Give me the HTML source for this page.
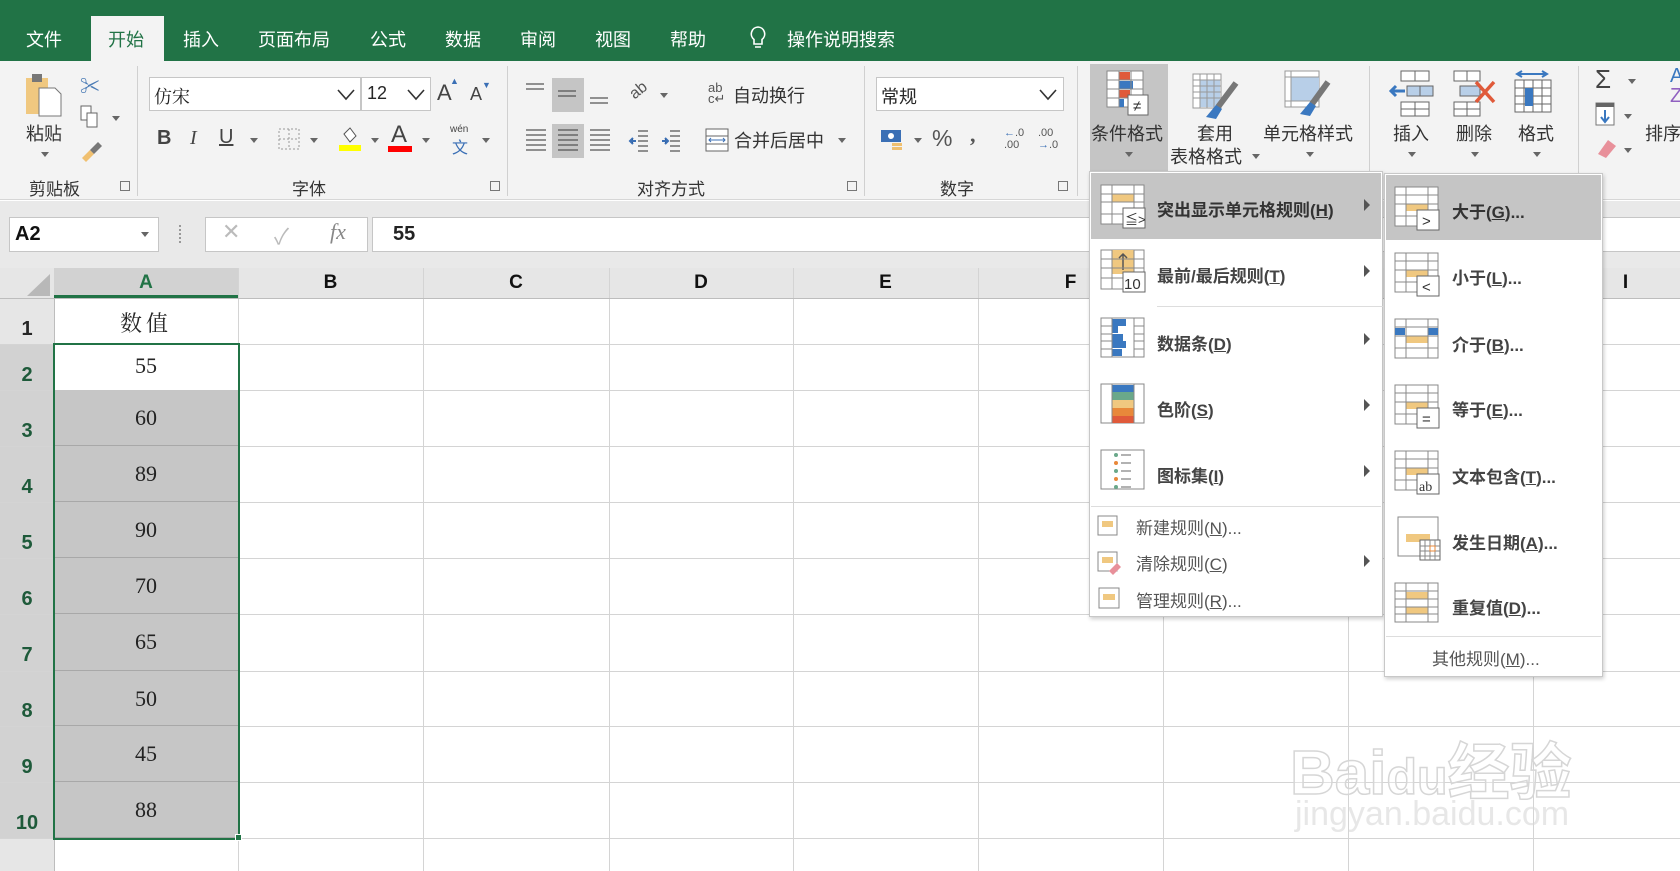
<!DOCTYPE html>
<html><head><meta charset="utf-8">
<style>
*{margin:0;padding:0;box-sizing:border-box}
body{width:1680px;height:871px;overflow:hidden;position:relative;background:#fff;font-family:"Liberation Sans","Noto Sans CJK SC",sans-serif;color:#262626}
.a{position:absolute}
.tab{position:absolute;top:26px;font-size:18px;color:#fff;white-space:nowrap}
.lbl{position:absolute;font-size:17px;color:#333;white-space:nowrap}
.sep{position:absolute;top:66px;width:1px;height:130px;background:#d0d0d0}
.ch{position:absolute;top:268px;height:30px;font:900 19px "Liberation Sans",sans-serif;text-align:center;line-height:30px;color:#111}
.cell{position:absolute;left:54px;width:184px;text-align:center;font:22px "Liberation Serif","Noto Serif CJK SC",serif;color:#222;background:#c6c6c6;border-bottom:1px solid #a8a8a8}
.mi{position:absolute;font-size:17px;font-weight:bold;color:#444;white-space:nowrap}
.ms{position:absolute;font-size:17px;color:#555;white-space:nowrap}
.tri{position:absolute;width:0;height:0;border-top:6px solid transparent;border-bottom:6px solid transparent;border-left:6px solid #555}
.dd{position:absolute;width:0;height:0;border-left:4px solid transparent;border-right:4px solid transparent;border-top:5px solid #666}
</style></head><body>
<div class="a" style="left:0;top:0;width:1680px;height:61px;background:#217346"></div>
<div class="a" style="left:91px;top:16px;width:73px;height:46px;background:#f3f3f3"></div>
<div class="tab" style="left:26px">文件</div>
<div class="tab" style="left:108px;color:#217346">开始</div>
<div class="tab" style="left:183px">插入</div>
<div class="tab" style="left:258px">页面布局</div>
<div class="tab" style="left:370px">公式</div>
<div class="tab" style="left:445px">数据</div>
<div class="tab" style="left:520px">审阅</div>
<div class="tab" style="left:595px">视图</div>
<div class="tab" style="left:670px">帮助</div>
<svg class="a" style="left:748px;top:25px" width="20" height="26"><path d="M10 2a7 7 0 0 0-4 12.5V19h8v-4.5A7 7 0 0 0 10 2z M7 22h6" fill="none" stroke="#fff" stroke-width="1.6"/></svg>
<div class="tab" style="left:787px">操作说明搜索</div>

<div class="a" style="left:0;top:61px;width:1680px;height:139px;background:#f3f3f3;border-bottom:1px solid #d6d6d6"></div>
<div class="a" style="left:1090px;top:64px;width:78px;height:108px;background:#c5c5c5"></div>
<div class="sep" style="left:137px"></div><div class="sep" style="left:507px"></div><div class="sep" style="left:864px"></div><div class="sep" style="left:1077px"></div><div class="sep" style="left:1369px"></div><div class="sep" style="left:1578px"></div>

<svg class="a" style="left:24px;top:72px" width="44" height="46"><rect x="2" y="6" width="22" height="36" fill="#f0c880"/><rect x="8" y="2" width="10" height="8" fill="#777"/><path d="M15 16h16l6 6v22H15z" fill="#fff" stroke="#777"/></svg>
<div class="lbl" style="left:26px;top:120px;font-size:18px">粘贴</div>
<div class="dd" style="left:41px;top:152px"></div>
<div class="a" style="left:80px;top:70px;font-size:20px;color:#4a7bb5">✂</div>
<svg class="a" style="left:80px;top:105px" width="30" height="26"><rect x="1" y="1" width="10" height="14" fill="#fff" stroke="#666"/><rect x="7" y="8" width="10" height="14" fill="#fff" stroke="#666"/></svg>
<div class="dd" style="left:112px;top:116px"></div>
<svg class="a" style="left:78px;top:138px" width="26" height="26"><path d="M4 20l8-8 4 4-8 8z" fill="#f0c070"/><path d="M12 12l8-8 4 4-8 8z" fill="#777"/></svg>
<div class="lbl" style="left:29px;top:175px">剪贴板</div>
<div class="a" style="left:120px;top:181px;width:10px;height:10px;border:1px solid #777"></div>

<div class="a" style="left:149px;top:77px;width:212px;height:34px;background:#fff;border:1px solid #c6c6c6;font:18px 'Noto Serif CJK SC',serif;padding:5px 4px;color:#222">仿宋</div>
<svg class="a" style="left:336px;top:88px" width="20" height="14"><path d="M2 2l8 9 8-9" fill="none" stroke="#333" stroke-width="1.6"/></svg>
<div class="a" style="left:361px;top:77px;width:70px;height:34px;background:#fff;border:1px solid #c6c6c6;font-size:18px;padding:5px 5px">12</div>
<svg class="a" style="left:406px;top:88px" width="20" height="14"><path d="M2 2l8 9 8-9" fill="none" stroke="#333" stroke-width="1.6"/></svg>
<div class="a" style="left:437px;top:80px;font-size:22px;color:#444">A</div><div class="a" style="left:450px;top:76px;font-size:9px;color:#3a6fb5">▲</div>
<div class="a" style="left:470px;top:84px;font-size:18px;color:#444">A</div><div class="a" style="left:482px;top:80px;font-size:9px;color:#3a6fb5">▼</div>
<div class="a" style="left:157px;top:127px;font:bold 20px 'Liberation Sans';color:#444">B</div>
<div class="a" style="left:190px;top:127px;font:italic 20px 'Liberation Serif';color:#444">I</div>
<div class="a" style="left:219px;top:126px;font:20px 'Liberation Sans';color:#444;text-decoration:underline">U</div>
<div class="dd" style="left:250px;top:138px"></div>
<svg class="a" style="left:278px;top:128px" width="22" height="22"><rect x="1" y="1" width="20" height="20" fill="none" stroke="#999" stroke-dasharray="2 2"/><path d="M11 1v20M1 11h20" stroke="#999" stroke-dasharray="2 2"/></svg>
<div class="dd" style="left:310px;top:138px"></div>
<svg class="a" style="left:338px;top:124px" width="24" height="28"><path d="M6 10l6-6 6 8-6 6z" fill="#fff" stroke="#555"/><rect x="1" y="21" width="22" height="6" fill="#ffff00"/></svg>
<div class="dd" style="left:371px;top:138px"></div>
<div class="a" style="left:391px;top:121px;font-size:24px;color:#444">A</div><div class="a" style="left:388px;top:146px;width:24px;height:6px;background:#ff0000"></div>
<div class="dd" style="left:422px;top:138px"></div>
<div class="a" style="left:450px;top:124px;font-size:10px;color:#444">wén</div><div class="a" style="left:452px;top:134px;font-size:16px;color:#3a6fb5">文</div>
<div class="dd" style="left:482px;top:138px"></div>
<div class="lbl" style="left:292px;top:175px">字体</div>
<div class="a" style="left:490px;top:181px;width:10px;height:10px;border:1px solid #777"></div>

<div class="a" style="left:552px;top:78px;width:32px;height:34px;background:#c5c5c5"></div>
<div class="a" style="left:552px;top:124px;width:32px;height:34px;background:#c5c5c5"></div>
<svg class="a" style="left:524px;top:80px" width="100" height="80" stroke="#555" stroke-width="1.3">
<path d="M2 4h18M2 9h18M34 11h18M34 16h18M66 18h18M66 23h18"/>
<path d="M2 50h20M2 55h20M2 60h20M2 65h20M2 70h20M34 50h20M34 55h20M34 60h20M34 65h20M34 70h20M66 50h20M66 55h20M66 60h20M66 65h20M66 70h20"/></svg>
<div class="a" style="left:630px;top:82px;font-size:16px;color:#555;transform:rotate(-40deg)">ab</div><div class="dd" style="left:660px;top:93px"></div>
<svg class="a" style="left:628px;top:127px" width="60" height="28" stroke="#555" stroke-width="1.3"><path d="M10 4h10M10 9h10M10 14h10M10 19h10M10 24h10M42 4h10M42 9h10M42 14h10M42 19h10M42 24h10"/><path d="M8 14l-6 0M5 11l-3 3 3 3M34 14h6M37 11l3 3-3 3" stroke="#3a6fb5" stroke-width="2"/></svg>
<div class="a" style="left:708px;top:82px;font-size:13px;color:#555;line-height:11px">ab<br>c↵</div>
<div class="lbl" style="left:733px;top:82px;font-size:18px">自动换行</div>
<svg class="a" style="left:705px;top:128px" width="24" height="24"><rect x="1" y="1" width="22" height="22" fill="#fff" stroke="#666"/><path d="M1 8h22M1 16h22" stroke="#666"/><path d="M4 12h16M6 10l-2 2 2 2M18 10l2 2-2 2" stroke="#3a6fb5" fill="none"/></svg>
<div class="lbl" style="left:734px;top:127px;font-size:18px">合并后居中</div>
<div class="dd" style="left:838px;top:138px"></div>
<div class="lbl" style="left:637px;top:175px">对齐方式</div>
<div class="a" style="left:847px;top:181px;width:10px;height:10px;border:1px solid #777"></div>

<div class="a" style="left:876px;top:77px;width:188px;height:34px;background:#fff;border:1px solid #c6c6c6;font-size:18px;padding:5px 4px">常规</div>
<svg class="a" style="left:1038px;top:88px" width="20" height="14"><path d="M2 2l8 9 8-9" fill="none" stroke="#333" stroke-width="1.6"/></svg>
<svg class="a" style="left:880px;top:128px" width="26" height="26"><rect x="1" y="2" width="20" height="12" fill="#3a6fb5"/><circle cx="11" cy="8" r="3" fill="#fff"/><rect x="12" y="15" width="10" height="3" fill="#f0c070"/><rect x="12" y="19" width="10" height="3" fill="#f0c070"/></svg>
<div class="dd" style="left:914px;top:138px"></div>
<div class="a" style="left:932px;top:125px;font-size:23px;color:#555">%</div>
<div class="a" style="left:970px;top:122px;font:bold 22px 'Liberation Serif';color:#555">,</div>
<div class="a" style="left:1004px;top:127px;font-size:11px;color:#555;line-height:12px"><span style="color:#3a6fb5">←</span>.0<br>.00</div>
<div class="a" style="left:1038px;top:127px;font-size:11px;color:#555;line-height:12px">.00<br><span style="color:#3a6fb5">→</span>.0</div>
<div class="lbl" style="left:940px;top:175px">数字</div>
<div class="a" style="left:1058px;top:181px;width:10px;height:10px;border:1px solid #777"></div>

<svg class="a" style="left:1106px;top:70px" width="46" height="50"><g fill="#fff" stroke="#888"><rect x="1" y="1" width="36" height="36"/></g><rect x="13" y="2" width="11" height="8" fill="#e05a3a"/><rect x="13" y="11" width="14" height="8" fill="#3a78c0"/><rect x="13" y="20" width="11" height="8" fill="#e05a3a"/><rect x="13" y="29" width="5" height="8" fill="#3a78c0"/><path d="M1 10h36M1 19h36M1 28h36M13 1v36M25 1v36" stroke="#888"/><rect x="22" y="25" width="20" height="20" fill="#fff" stroke="#666"/><text x="27" y="41" font-size="15" fill="#333">≠</text></svg>
<div class="lbl" style="left:1091px;top:120px;font-size:18px">条件格式</div>
<div class="dd" style="left:1125px;top:152px"></div>
<svg class="a" style="left:1192px;top:73px" width="48" height="50"><rect x="1" y="1" width="28" height="34" fill="#fff" stroke="#999"/><rect x="8" y="7" width="20" height="27" fill="#b8cfe8"/><path d="M1 7h28M1 13h28M1 19h28M1 25h28M8 1v34M15 1v34M22 1v34" stroke="#999"/><path d="M44 10l-18 24" stroke="#777" stroke-width="6"/><path d="M14 44l10-12 6 4-6 10z" fill="#3a78c0"/></svg>
<div class="lbl" style="left:1197px;top:120px;font-size:18px">套用</div>
<div class="lbl" style="left:1170px;top:143px;font-size:18px">表格格式</div><div class="dd" style="left:1252px;top:154px"></div>
<svg class="a" style="left:1284px;top:70px" width="48" height="50"><rect x="1" y="1" width="34" height="36" fill="#fff" stroke="#999"/><rect x="7" y="7" width="28" height="24" fill="#b8cfe8"/><path d="M1 7h34M7 1v36M1 31h34" stroke="#999"/><path d="M44 12l-16 22" stroke="#777" stroke-width="6"/><path d="M16 44l10-12 6 4-6 10z" fill="#3a78c0"/></svg>
<div class="lbl" style="left:1263px;top:120px;font-size:18px">单元格样式</div>
<div class="dd" style="left:1306px;top:152px"></div>
<svg class="a" style="left:1389px;top:70px" width="46" height="48" stroke="#666" fill="#fff"><rect x="12" y="1" width="28" height="10"/><path d="M26 1v10"/><rect x="18" y="16" width="26" height="10" fill="#b8cfe8"/><path d="M31 16v10"/><rect x="12" y="32" width="28" height="14"/><path d="M26 32v14M12 39h28"/><path d="M2 21h14M7 16l-5 5 5 5" stroke="#3a78c0" stroke-width="3" fill="none"/></svg>
<div class="lbl" style="left:1393px;top:120px;font-size:18px">插入</div><div class="dd" style="left:1408px;top:152px"></div>
<svg class="a" style="left:1452px;top:70px" width="46" height="48" stroke="#666" fill="#fff"><rect x="2" y="1" width="26" height="10"/><path d="M15 1v10"/><rect x="8" y="16" width="20" height="10" fill="#b8cfe8"/><rect x="2" y="32" width="26" height="14"/><path d="M15 32v14M2 39h26"/><path d="M24 12l18 20M42 12l-18 20" stroke="#e05a3a" stroke-width="3.5"/></svg>
<div class="lbl" style="left:1456px;top:120px;font-size:18px">删除</div><div class="dd" style="left:1471px;top:152px"></div>
<svg class="a" style="left:1514px;top:70px" width="40" height="48" stroke="#666" fill="#fff"><path d="M3 4h30M8 1l-5 3 5 3M28 1l5 3-5 3" stroke="#3a78c0" stroke-width="2" fill="none"/><rect x="1" y="10" width="36" height="32"/><path d="M1 18h36M1 26h36M1 34h36M10 10v32M19 10v32M28 10v32"/><rect x="11" y="18" width="8" height="18" fill="#3a78c0" stroke="none"/></svg>
<div class="lbl" style="left:1518px;top:120px;font-size:18px">格式</div><div class="dd" style="left:1533px;top:152px"></div>
<div class="a" style="left:1595px;top:64px;font-size:26px;color:#444">Σ</div><div class="dd" style="left:1628px;top:79px"></div>
<svg class="a" style="left:1595px;top:102px" width="22" height="24"><rect x="1" y="1" width="18" height="22" fill="#fff" stroke="#777"/><rect x="1" y="1" width="18" height="4" fill="#666"/><path d="M10 8v12M6 15l4 5 4-5" stroke="#3a78c0" stroke-width="2" fill="none"/></svg><div class="dd" style="left:1624px;top:114px"></div>
<svg class="a" style="left:1594px;top:136px" width="24" height="24"><path d="M4 18l10-14 8 6-10 12z" fill="#e8909a"/></svg><div class="dd" style="left:1624px;top:148px"></div>
<div class="a" style="left:1670px;top:66px;font-size:20px;color:#3a78c0;line-height:20px">A<br><span style="color:#9060c0">Z</span></div>
<div class="lbl" style="left:1645px;top:120px;font-size:18px">排序</div>

<div class="a" style="left:0;top:201px;width:1680px;height:67px;background:#e9e9e9"></div>
<div class="a" style="left:9px;top:217px;width:150px;height:35px;background:#fff;border:1px solid #c6c6c6;font:900 20px 'Liberation Sans';padding:5px 5px;color:#111">A2</div>
<div class="dd" style="left:141px;top:232px"></div>
<div class="a" style="left:179px;top:225px;width:2px;height:18px;border-left:2px dotted #999"></div>
<div class="a" style="left:205px;top:217px;width:163px;height:35px;background:#fff;border:1px solid #c6c6c6"></div>
<div class="a" style="left:222px;top:219px;font-size:22px;color:#bbb">✕</div>
<div class="a" style="left:274px;top:219px;font-size:22px;color:#bbb">✓</div>
<div class="a" style="left:330px;top:219px;font:italic 22px 'Liberation Serif';color:#888">fx</div>
<div class="a" style="left:372px;top:217px;width:1320px;height:35px;background:#fff;border:1px solid #c6c6c6;font:900 20px 'Liberation Sans';padding:5px 20px;color:#222">55</div>

<svg class="a" style="left:0;top:268px" width="1680" height="603">
<rect x="0" y="0" width="1680" height="30" fill="#e6e6e6"/>
<rect x="0" y="30" width="54" height="573" fill="#e6e6e6"/>
<rect x="0" y="76" width="54" height="494" fill="#d2d2d2"/>
<path d="M27 28L50 28L50 6Z" fill="#b8b8b8"/>
<g stroke="#d4d4d4"><path d="M0 76.5H1680M0 122.5H1680M0 178.5H1680M0 234.5H1680M0 290.5H1680M0 346.5H1680M0 403.5H1680M0 458.5H1680M0 514.5H1680M0 570.5H1680"/>
<path d="M238.5 0V603M423.5 0V603M609.5 0V603M793.5 0V603M978.5 0V603M1163.5 0V603M1348.5 0V603M1533.5 0V603"/></g>
<path d="M0 30.5H1680M54.5 0V603" stroke="#bdbdbd"/>
<rect x="54" y="0" width="184" height="30" fill="#d2d2d2"/><rect x="54" y="27" width="184" height="3" fill="#217346"/>
</svg>
<div class="ch" style="left:54px;width:184px;color:#217346">A</div>
<div class="ch" style="left:238px;width:185px">B</div>
<div class="ch" style="left:423px;width:186px">C</div>
<div class="ch" style="left:609px;width:184px">D</div>
<div class="ch" style="left:793px;width:185px">E</div>
<div class="ch" style="left:978px;width:185px">F</div>
<div class="ch" style="left:1533px;width:185px">I</div>
<div class="a" style="left:0;top:318px;width:54px;text-align:center;font:900 20px 'Liberation Sans'">1</div>
<div class="a" style="left:0;top:364px;width:54px;text-align:center;font:900 20px 'Liberation Sans';color:#1e5a3a">2</div>
<div class="a" style="left:0;top:420px;width:54px;text-align:center;font:900 20px 'Liberation Sans';color:#1e5a3a">3</div>
<div class="a" style="left:0;top:476px;width:54px;text-align:center;font:900 20px 'Liberation Sans';color:#1e5a3a">4</div>
<div class="a" style="left:0;top:532px;width:54px;text-align:center;font:900 20px 'Liberation Sans';color:#1e5a3a">5</div>
<div class="a" style="left:0;top:588px;width:54px;text-align:center;font:900 20px 'Liberation Sans';color:#1e5a3a">6</div>
<div class="a" style="left:0;top:644px;width:54px;text-align:center;font:900 20px 'Liberation Sans';color:#1e5a3a">7</div>
<div class="a" style="left:0;top:700px;width:54px;text-align:center;font:900 20px 'Liberation Sans';color:#1e5a3a">8</div>
<div class="a" style="left:0;top:756px;width:54px;text-align:center;font:900 20px 'Liberation Sans';color:#1e5a3a">9</div>
<div class="a" style="left:0;top:812px;width:54px;text-align:center;font:900 20px 'Liberation Sans';color:#1e5a3a">10</div>

<div class="a" style="left:54px;top:307px;width:184px;text-align:center;font:22px 'Noto Serif CJK SC',serif;letter-spacing:4px">数值</div>
<div class="a" style="left:54px;top:353px;width:184px;text-align:center;font:22px 'Liberation Serif',serif">55</div>
<div class="cell" style="top:390px;height:56px;line-height:56px">60</div>
<div class="cell" style="top:446px;height:56px;line-height:56px">89</div>
<div class="cell" style="top:502px;height:56px;line-height:56px">90</div>
<div class="cell" style="top:558px;height:56px;line-height:56px">70</div>
<div class="cell" style="top:614px;height:57px;line-height:56px">65</div>
<div class="cell" style="top:671px;height:55px;line-height:56px">50</div>
<div class="cell" style="top:726px;height:56px;line-height:56px">45</div>
<div class="cell" style="top:782px;height:56px;line-height:56px">88</div>
<div class="a" style="left:53px;top:343px;width:187px;height:497px;border:2px solid #217346"></div>
<div class="a" style="left:235px;top:834px;width:7px;height:7px;background:#217346;border:1px solid #fff"></div>

<div class="a" style="left:1290px;top:722px;font:bold 62px 'Liberation Sans','Noto Sans CJK SC';color:rgba(255,255,255,0.3);-webkit-text-stroke:1.5px #d6d6d6">Bai<span style="font-size:50px">du</span>经验</div>
<div class="a" style="left:1295px;top:795px;font:34px 'Liberation Sans';color:rgba(215,215,215,0.6)">jingyan.baidu.com</div>

<div class="a" style="left:1089px;top:171px;width:294px;height:446px;background:#fff;border:1px solid #c8c8c8;box-shadow:1px 2px 4px rgba(0,0,0,.2)"></div>
<div class="a" style="left:1091px;top:173px;width:290px;height:66px;background:#c5c5c5"></div>
<div class="a" style="left:1157px;top:306px;width:226px;height:1px;background:#ddd"></div>
<div class="a" style="left:1091px;top:506px;width:290px;height:1px;background:#ddd"></div>
<svg class="a" style="left:1100px;top:184px" width="50" height="320">
<g fill="#fff" stroke="#888">
<rect x="1" y="1" width="43" height="39"/><rect x="1" y="66" width="43" height="39"/><rect x="1" y="134" width="43" height="39"/><rect x="1" y="200" width="43" height="39"/><rect x="1" y="266" width="43" height="39"/></g>
<rect x="12" y="10" width="22" height="8" fill="#f0c880"/>
<path d="M1 10h43M1 18h43M1 30h43M12 1v39M34 1v39" stroke="#888"/>
<rect x="23" y="24" width="22" height="20" fill="#fff" stroke="#666"/><text x="25" y="40" font-size="13" fill="#333">≦&gt;</text>
<rect x="12" y="66" width="22" height="24" fill="#f0c880"/><path d="M23 70v16M19 74l4-4 4 4" stroke="#555" fill="none" stroke-width="1.5"/>
<path d="M1 75h43M1 84h43M1 94h43M12 66v39M34 66v39" stroke="#888" fill="none"/>
<rect x="23" y="88" width="22" height="20" fill="#fff" stroke="#666"/><text x="24" y="105" font-size="15" fill="#333">10</text>
<rect x="12" y="135" width="14" height="7" fill="#3a78c0"/><rect x="12" y="142" width="6" height="7" fill="#3a78c0"/><rect x="12" y="150" width="11" height="7" fill="#3a78c0"/><rect x="12" y="157" width="14" height="7" fill="#3a78c0"/><rect x="12" y="165" width="10" height="7" fill="#3a78c0"/>
<path d="M12 134v39M34 134v39M1 142h11M34 142h10M1 150h11M34 150h10M1 157h11M34 157h10M1 165h11M34 165h10" stroke="#888"/>
<rect x="12" y="201" width="22" height="7" fill="#3a78c0"/><rect x="12" y="208" width="22" height="8" fill="#6aa88a"/><rect x="12" y="216" width="22" height="8" fill="#f0c880"/><rect x="12" y="224" width="22" height="8" fill="#e8883a"/><rect x="12" y="232" width="22" height="7" fill="#e05a3a"/>
<path d="M12 200v39M34 200v39" stroke="#888"/>
<g fill="#6aa88a"><circle cx="16" cy="271" r="2"/><circle cx="16" cy="287" r="2"/><circle cx="16" cy="303" r="2"/></g><g fill="#e8883a"><circle cx="16" cy="279" r="2"/><circle cx="16" cy="295" r="2"/></g>
<path d="M21 271h10M21 279h10M21 287h10M21 295h10M21 303h10" stroke="#666"/>
</svg>
<div class="mi" style="left:1157px;top:196px;color:#333">突出显示单元格规则(<u>H</u>)</div>
<div class="mi" style="left:1157px;top:262px">最前/最后规则(<u>T</u>)</div>
<div class="mi" style="left:1157px;top:330px">数据条(<u>D</u>)</div>
<div class="mi" style="left:1157px;top:396px">色阶(<u>S</u>)</div>
<div class="mi" style="left:1157px;top:462px">图标集(<u>I</u>)</div>
<div class="tri" style="left:1364px;top:199px"></div><div class="tri" style="left:1364px;top:265px"></div><div class="tri" style="left:1364px;top:333px"></div><div class="tri" style="left:1364px;top:399px"></div><div class="tri" style="left:1364px;top:465px"></div><div class="tri" style="left:1364px;top:555px"></div>
<svg class="a" style="left:1097px;top:515px" width="26" height="100"><g fill="#fff" stroke="#888"><rect x="1" y="1" width="19" height="19"/><rect x="1" y="37" width="19" height="19"/><rect x="2" y="73" width="20" height="20"/></g><rect x="5" y="6" width="11" height="6" fill="#f0c880"/><rect x="5" y="42" width="11" height="6" fill="#f0c880"/><rect x="6" y="79" width="12" height="6" fill="#f0c880"/><path d="M12 56l8-8 4 4-8 8z" fill="#e8909a"/></svg>
<div class="ms" style="left:1136px;top:514px">新建规则(<u>N</u>)...</div>
<div class="ms" style="left:1136px;top:550px">清除规则(<u>C</u>)</div>
<div class="ms" style="left:1136px;top:587px">管理规则(<u>R</u>)...</div>

<div class="a" style="left:1384px;top:173px;width:219px;height:504px;background:#fff;border:1px solid #c8c8c8;box-shadow:1px 2px 4px rgba(0,0,0,.2)"></div>
<div class="a" style="left:1386px;top:175px;width:215px;height:65px;background:#c5c5c5"></div>
<div class="a" style="left:1386px;top:636px;width:215px;height:1px;background:#ddd"></div>
<svg class="a" style="left:1394px;top:186px" width="52" height="450">
<g fill="#fff" stroke="#888"><rect x="1" y="1" width="43" height="39"/><rect x="1" y="67" width="43" height="39"/><rect x="1" y="133" width="43" height="39"/><rect x="1" y="199" width="43" height="39"/><rect x="1" y="265" width="43" height="39"/><rect x="4" y="331" width="40" height="39"/><rect x="1" y="397" width="43" height="39"/></g>
<g fill="#f0c880"><rect x="12" y="18" width="22" height="7"/><rect x="12" y="84" width="22" height="7"/><rect x="12" y="150" width="22" height="7"/><rect x="12" y="216" width="22" height="7"/><rect x="12" y="282" width="22" height="7"/><rect x="12" y="348" width="24" height="8"/><rect x="12" y="406" width="22" height="7"/><rect x="12" y="421" width="22" height="7"/></g>
<rect x="1" y="142" width="10" height="7" fill="#3a78c0"/><rect x="34" y="142" width="10" height="7" fill="#3a78c0"/>
<g stroke="#888" fill="none"><path d="M1 9h43M1 18h43M1 30h43M12 1v39M34 1v39M1 75h43M1 84h43M1 96h43M12 67v39M34 67v39M1 141h43M1 150h43M1 162h43M12 133v39M34 133v39M1 207h43M1 216h43M1 228h43M12 199v39M34 199v39M1 273h43M1 282h43M1 294h43M12 265v39M34 265v39M1 405h43M1 413h43M1 421h43M1 428h43M12 397v39M34 397v39"/></g>
<g fill="#fff" stroke="#666"><rect x="23" y="24" width="22" height="20"/><rect x="23" y="90" width="22" height="20"/><rect x="23" y="222" width="22" height="20"/><rect x="23" y="288" width="22" height="20"/><rect x="26" y="354" width="20" height="20"/></g>
<text x="28" y="40" font-size="15" fill="#333">&gt;</text><text x="28" y="106" font-size="15" fill="#333">&lt;</text><text x="28" y="238" font-size="15" fill="#333">=</text><text x="25" y="305" font-size="14" fill="#333" font-family="Liberation Serif">ab</text>
<path d="M26 360h20M31 354v20M36 354v20M41 354v20M26 365h20M26 370h20" stroke="#888"/><rect x="36" y="360" width="5" height="5" fill="none" stroke="#e8883a"/>
</svg>
<div class="mi" style="left:1452px;top:198px;color:#333">大于(<u>G</u>)...</div>
<div class="mi" style="left:1452px;top:264px">小于(<u>L</u>)...</div>
<div class="mi" style="left:1452px;top:331px">介于(<u>B</u>)...</div>
<div class="mi" style="left:1452px;top:396px">等于(<u>E</u>)...</div>
<div class="mi" style="left:1452px;top:463px">文本包含(<u>T</u>)...</div>
<div class="mi" style="left:1452px;top:529px">发生日期(<u>A</u>)...</div>
<div class="mi" style="left:1452px;top:594px">重复值(<u>D</u>)...</div>
<div class="ms" style="left:1432px;top:645px">其他规则(<u>M</u>)...</div>
</body></html>
